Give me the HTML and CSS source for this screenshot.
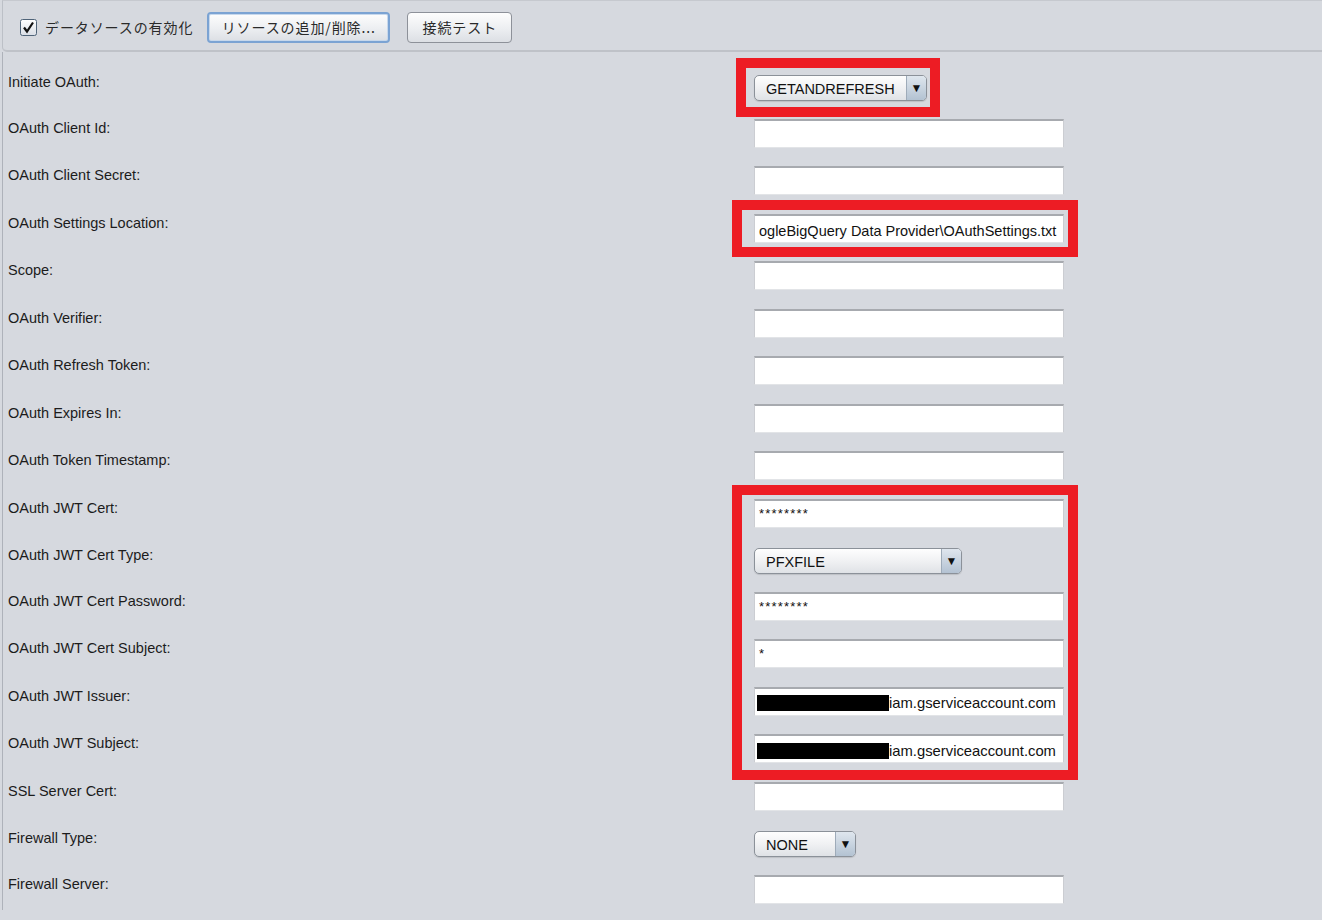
FILE: index.html
```html
<!DOCTYPE html>
<html lang="ja">
<head>
  <meta charset="UTF-8" />
  <title>Data Provider Settings</title>
  <link rel="stylesheet" href="styles.css">
</head>
<body>
<div class="page">
  <!-- Toolbar -->
  <div class="toolbar">
    <label class="check">
      <svg class="check-box" viewBox="0 0 17 17" width="17" height="17">
        <defs>
          <linearGradient id="cb" x1="0" y1="0" x2="0" y2="1">
            <stop offset="0" stop-color="#ffffff"/>
            <stop offset="1" stop-color="#d9dee6"/>
          </linearGradient>
        </defs>
        <rect x="0.5" y="0.5" width="16" height="16" rx="2" fill="url(#cb)" stroke="#4f6378"/>
        <path d="M4 8.5 L7 12.5 L13 3.5" fill="none" stroke="#111" stroke-width="2.2"/>
      </svg>
      <span>データソースの有効化</span>
    </label>
    <button class="btn btn-focus">リソースの追加/削除...</button>
    <button class="btn btn-test">接続テスト</button>
  </div>

  <!-- Settings form -->
  <div class="form">
    <div class="row row-combo">
      <div class="label">Initiate OAuth:</div>
      <div class="combo" style="width: 173px"><span class="combo-text">GETANDREFRESH</span><span class="combo-arrow">▼</span></div>
    </div>
    <div class="row">
      <div class="label">OAuth Client Id:</div>
      <div class="field"></div>
    </div>
    <div class="row">
      <div class="label">OAuth Client Secret:</div>
      <div class="field"></div>
    </div>
    <div class="row">
      <div class="label">OAuth Settings Location:</div>
      <div class="field">ogleBigQuery Data Provider\OAuthSettings.txt</div>
    </div>
    <div class="row">
      <div class="label">Scope:</div>
      <div class="field"></div>
    </div>
    <div class="row">
      <div class="label">OAuth Verifier:</div>
      <div class="field"></div>
    </div>
    <div class="row">
      <div class="label">OAuth Refresh Token:</div>
      <div class="field"></div>
    </div>
    <div class="row">
      <div class="label">OAuth Expires In:</div>
      <div class="field"></div>
    </div>
    <div class="row">
      <div class="label">OAuth Token Timestamp:</div>
      <div class="field"></div>
    </div>
    <div class="row">
      <div class="label">OAuth JWT Cert:</div>
      <div class="field field-secret">********</div>
    </div>
    <div class="row row-combo">
      <div class="label">OAuth JWT Cert Type:</div>
      <div class="combo" style="width: 208px"><span class="combo-text">PFXFILE</span><span class="combo-arrow">▼</span></div>
    </div>
    <div class="row">
      <div class="label">OAuth JWT Cert Password:</div>
      <div class="field field-secret">********</div>
    </div>
    <div class="row">
      <div class="label">OAuth JWT Cert Subject:</div>
      <div class="field field-secret">*</div>
    </div>
    <div class="row">
      <div class="label">OAuth JWT Issuer:</div>
      <div class="field field-redacted"><span class="redact"></span>iam.gserviceaccount.com</div>
    </div>
    <div class="row">
      <div class="label">OAuth JWT Subject:</div>
      <div class="field field-redacted"><span class="redact"></span>iam.gserviceaccount.com</div>
    </div>
    <div class="row">
      <div class="label">SSL Server Cert:</div>
      <div class="field"></div>
    </div>
    <div class="row row-combo">
      <div class="label">Firewall Type:</div>
      <div class="combo" style="width: 102px"><span class="combo-text">NONE</span><span class="combo-arrow">▼</span></div>
    </div>
    <div class="row">
      <div class="label">Firewall Server:</div>
      <div class="field"></div>
    </div>
  </div>

  <!-- Red annotation boxes -->
  <div class="mark mark-oauth"></div>
  <div class="mark mark-location"></div>
  <div class="mark mark-jwt"></div>
</div>
</body>
</html>
```

FILE: styles.css
```css
* {
  margin: 0;
  padding: 0;
  box-sizing: border-box;
}

body {
  font-family: 'Liberation Sans', Arial, 'Noto Sans CJK JP', sans-serif;
  font-size: 14.5px;
  color: #1c1c1c;
  background: #d6d9df;
}

.page {
  position: relative;
  width: 1322px;
  height: 920px;
  overflow: hidden;
}

/* Toolbar */
.toolbar {
  height: 52px;
  margin-left: 2px;
  border-left: 1px solid #bcc0c7;
  border-bottom: 2px solid #bfc2c8;
  border-top: 1px solid #c6c9cf;
  border-bottom-left-radius: 5px;
  display: flex;
  align-items: center;
  padding: 3px 0 0 17px;
}

.check {
  display: flex;
  align-items: center;
  gap: 8px;
  margin-right: 14px;
}

.check span,
.btn {
  font-family: 'Noto Sans CJK JP', 'Liberation Sans', sans-serif;
  font-size: 14px;
  letter-spacing: 0.9px;
  color: #2a2a2a;
}

.btn {
  height: 31px;
  border: 1px solid #8d9199;
  border-radius: 4px;
  background: linear-gradient(#fdfdfd, #eceef1 55%, #dcdfe4);
  display: flex;
  align-items: center;
  justify-content: center;
}

.btn-focus {
  width: 183px;
  border: 2px solid #7ba3d3;
  box-shadow: inset 0 0 0 1px #c7d8ec;
}

.btn-test {
  width: 105px;
  margin-left: 17px;
}

/* Form */
.form {
  margin-left: 2px;
  border-left: 1px solid #aeb2ba;
  padding: 9px 0 0 5px;
}

.row {
  display: grid;
  grid-template-columns: 746px auto;
  align-items: start;
  height: 47.5px;
}

.row-combo {
  height: 45.5px;
}

.label {
  padding-top: 13px;
  line-height: 16px;
}

.field {
  width: 310px;
  height: 29px;
  margin-top: 12px;
  background: #fff;
  border-top: 2px solid #a7aaaf;
  border-left: 1px solid #cbcdd2;
  border-right: 1px solid #cbcdd2;
  border-bottom: 1px solid #e2e4e7;
  padding: 0 5px 0 4px;
  line-height: 30px;
  white-space: nowrap;
  overflow: hidden;
  font-size: 14.5px;
  color: #111;
}

.field-secret {
  font-size: 13px;
  letter-spacing: 1.2px;
  line-height: 26px;
}

.field-redacted {
  display: flex;
  align-items: center;
  padding-left: 2px;
  padding-top: 3px;
  font-size: 14.8px;
}

.redact {
  width: 132px;
  height: 16px;
  background: #000;
}

/* Combo boxes */
.combo {
  height: 26px;
  margin-top: 14px;
  display: flex;
  border: 1px solid #8b9199;
  border-radius: 5px;
  background: linear-gradient(#fefefe, #f0f1f3 50%, #dfe2e6);
  overflow: hidden;
  box-shadow: 0 1px 1px rgba(0, 0, 0, 0.12);
}

.combo-text {
  flex: 1;
  padding-left: 11px;
  line-height: 26px;
  font-size: 14.5px;
  color: #111;
}

.combo-arrow {
  width: 20px;
  border-left: 1px solid #9eabb9;
  background: linear-gradient(#dfe6ee, #b3c2d2);
  font-size: 12px;
  line-height: 24px;
  text-align: center;
  color: #111;
}

/* Red highlight marks */
.mark {
  position: absolute;
  border: 10px solid #ed1c24;
}

.mark-oauth {
  left: 736px;
  top: 58px;
  width: 204px;
  height: 59px;
}

.mark-location {
  left: 732px;
  top: 200px;
  width: 346px;
  height: 57px;
}

.mark-jwt {
  left: 732px;
  top: 485px;
  width: 346px;
  height: 295px;
}
```
